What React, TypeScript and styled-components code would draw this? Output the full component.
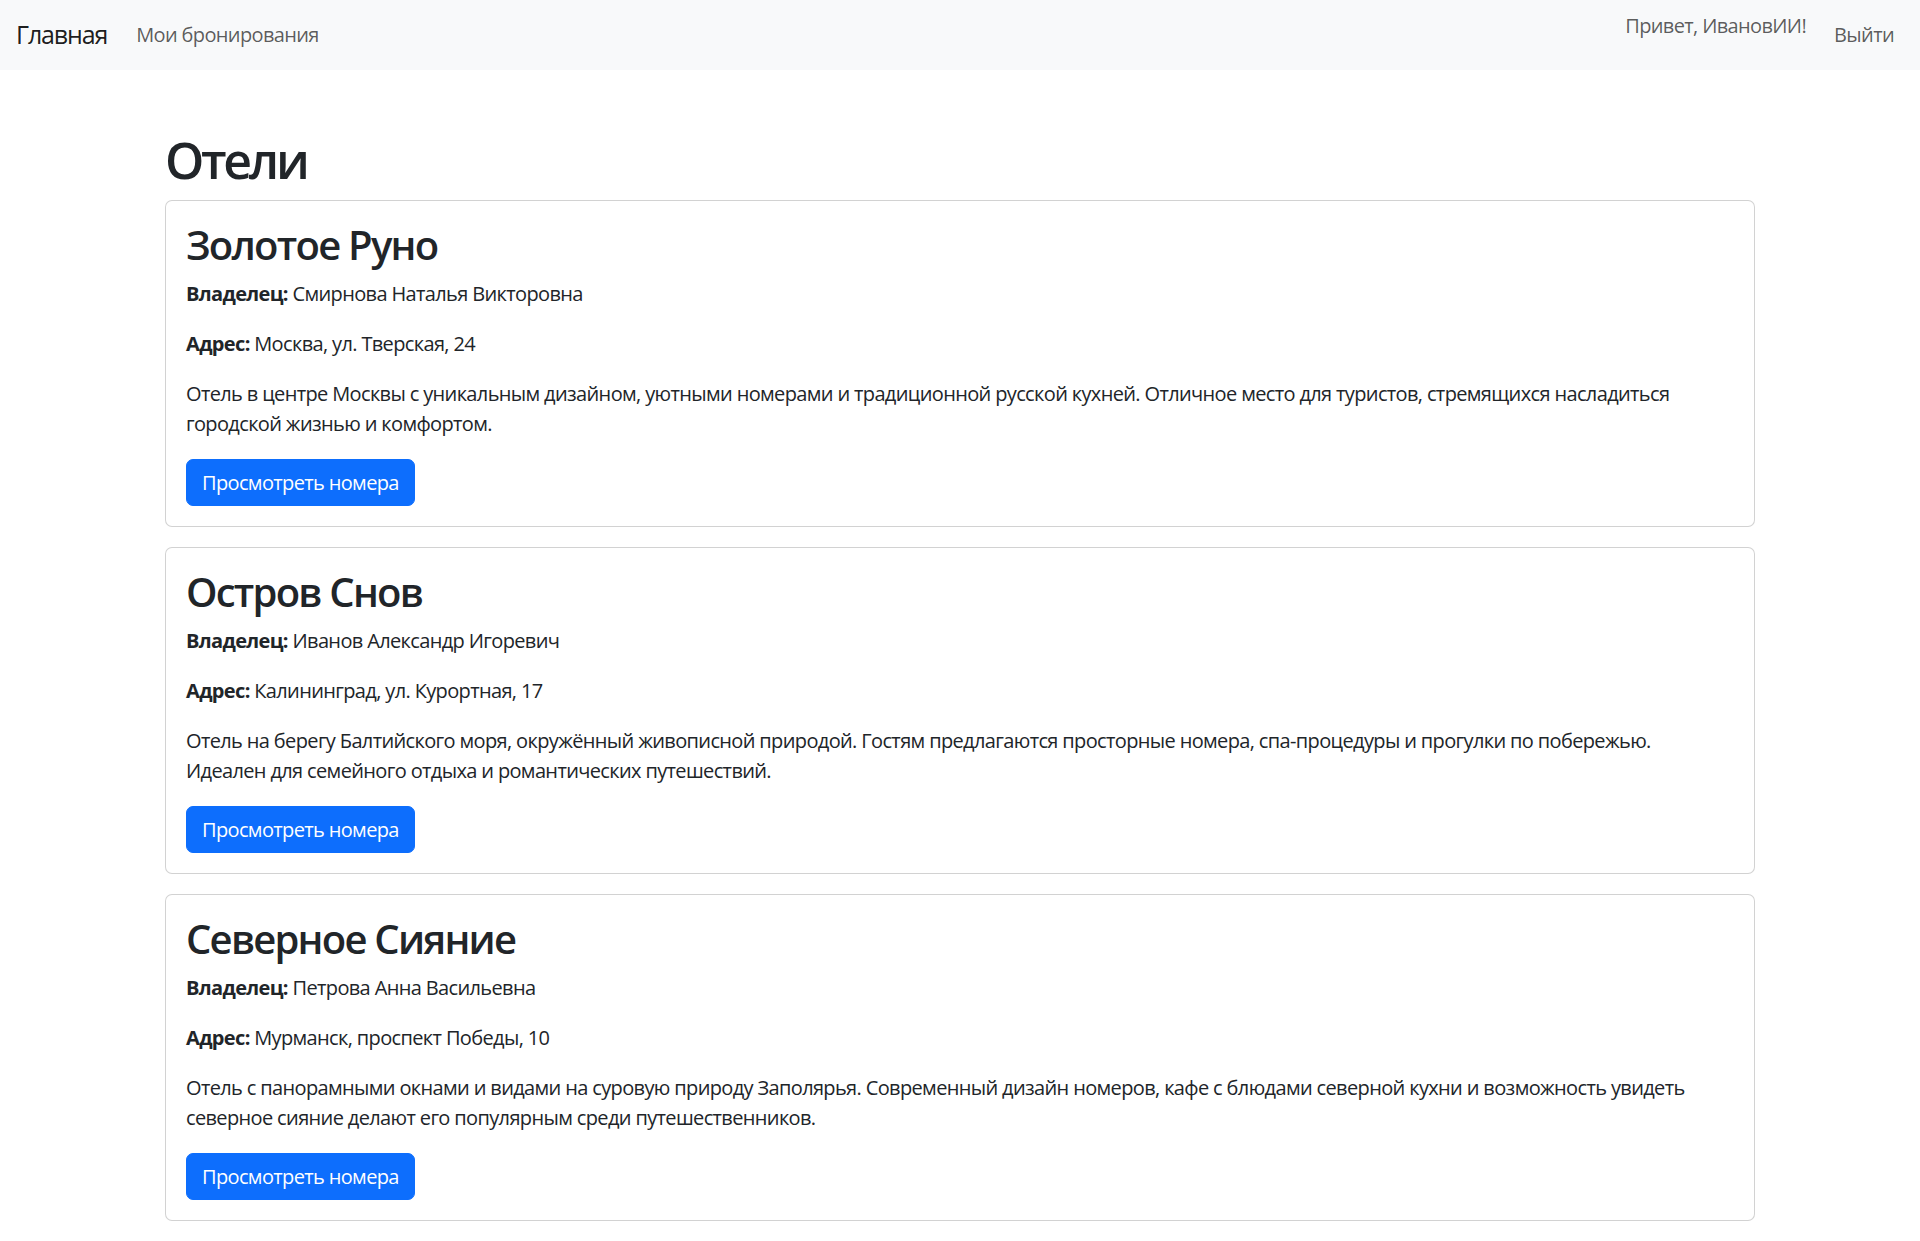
import React from "react";
import styled, { createGlobalStyle } from "styled-components";

const GlobalStyle = createGlobalStyle`
  * { box-sizing: border-box; }
  html, body { margin: 0; padding: 0; }
  body {
    font-family: "Open Sans", "Noto Sans", Roboto, "Liberation Sans", sans-serif;
    font-size: 20px;
    line-height: 1.5;
    letter-spacing: -0.032em;
    color: #212529;
    background: #fff;
  }
`;

const Navbar = styled.nav`
  height: 70px;
  background: #f8f9fa;
  display: flex;
  align-items: center;
  justify-content: space-between;
  padding: 0 26px 0 16px;
`;

const NavLeft = styled.div`
  display: flex;
  align-items: center;
`;

const Brand = styled.a`
  font-size: 25px;
  line-height: 1.5;
  letter-spacing: -0.045em;
  color: rgba(0, 0, 0, 0.9);
  text-decoration: none;
  margin-right: 29px;
`;

const NavLink = styled.a`
  font-size: 20px;
  line-height: 30px;
  color: rgba(0, 0, 0, 0.65);
  text-decoration: none;
  padding: 10px 0;
`;

const NavRight = styled.div`
  display: flex;
  align-items: center;
  gap: 28px;
`;

const Greeting = styled.span<{ $shift: number }>`
  font-size: 20px;
  line-height: 30px;
  color: rgba(0, 0, 0, 0.65);
  transform: translateY(${(p) => p.$shift}px);
`;

const Container = styled.main`
  width: 1590px;
  margin: 60px auto 0;
`;

const PageTitle = styled.h1`
  font-size: 50px;
  font-weight: 600;
  line-height: 1.2;
  letter-spacing: -0.066em;
  margin: 0 0 10px;
`;

const Card = styled.section`
  border: 1px solid rgba(0, 0, 0, 0.175);
  border-radius: 7px;
  padding: 20px;
  margin-bottom: 20px;
  background: #fff;
`;

const CardTitle = styled.h2`
  font-size: 40px;
  font-weight: 600;
  line-height: 1.2;
  letter-spacing: -0.044em;
  margin: 0 0 10px;
`;

const Text = styled.p`
  margin: 0 0 20px;
  font-size: 20px;
  line-height: 30px;
`;

const Label = styled.strong`
  font-weight: 700;
`;

const Button = styled.button`
  display: inline-block;
  font-family: inherit;
  font-size: 20px;
  line-height: 30px;
  letter-spacing: inherit;
  color: #fff;
  background: #0d6efd;
  border: 1px solid #0d6efd;
  border-radius: 7px;
  padding: 7.5px 15px;
  cursor: pointer;
`;

const hotels = [
  {
    name: "Золотое Руно",
    owner: "Смирнова Наталья Викторовна",
    address: "Москва, ул. Тверская, 24",
    description:
      "Отель в центре Москвы с уникальным дизайном, уютными номерами и традиционной русской кухней. Отличное место для туристов, стремящихся насладиться городской жизнью и комфортом.",
  },
  {
    name: "Остров Снов",
    owner: "Иванов Александр Игоревич",
    address: "Калининград, ул. Курортная, 17",
    description:
      "Отель на берегу Балтийского моря, окружённый живописной природой. Гостям предлагаются просторные номера, спа-процедуры и прогулки по побережью. Идеален для семейного отдыха и романтических путешествий.",
  },
  {
    name: "Северное Сияние",
    owner: "Петрова Анна Васильевна",
    address: "Мурманск, проспект Победы, 10",
    description:
      "Отель с панорамными окнами и видами на суровую природу Заполярья. Современный дизайн номеров, кафе с блюдами северной кухни и возможность увидеть северное сияние делают его популярным среди путешественников.",
  },
];

export default function App() {
  return (
    <>
      <GlobalStyle />
      <Navbar>
        <NavLeft>
          <Brand href="#">Главная</Brand>
          <NavLink href="#">Мои бронирования</NavLink>
        </NavLeft>
        <NavRight>
          <Greeting $shift={-9}>Привет, ИвановИИ!</Greeting>
          <NavLink href="#">Выйти</NavLink>
        </NavRight>
      </Navbar>
      <Container>
        <PageTitle>Отели</PageTitle>
        {hotels.map((h) => (
          <Card key={h.name}>
            <CardTitle>{h.name}</CardTitle>
            <Text>
              <Label>Владелец:</Label> {h.owner}
            </Text>
            <Text>
              <Label>Адрес:</Label> {h.address}
            </Text>
            <Text>{h.description}</Text>
            <Button>Просмотреть номера</Button>
          </Card>
        ))}
      </Container>
    </>
  );
}
